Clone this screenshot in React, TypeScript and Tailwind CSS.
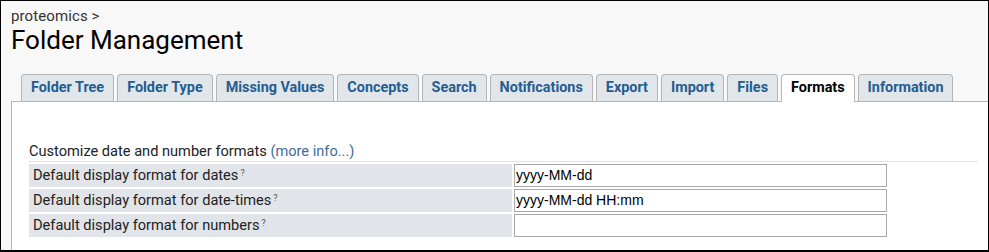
import React from "react";

const tabs = [
  "Folder Tree",
  "Folder Type",
  "Missing Values",
  "Concepts",
  "Search",
  "Notifications",
  "Export",
  "Import",
  "Files",
  "Formats",
  "Information",
];

const rows = [
  { label: "Default display format for dates", value: "yyyy-MM-dd" },
  { label: "Default display format for date-times", value: "yyyy-MM-dd HH:mm" },
  { label: "Default display format for numbers", value: "" },
];

export default function App() {
  return (
    <div className="w-[989px] h-[252px] overflow-hidden border-l border-t border-r border-b-2 border-black bg-[#f8f8f8] font-['Roboto',sans-serif] text-[#222]">
      <div className="pl-[10px] pt-[7px]">
        <div className="text-[15px] tracking-[0.1px] leading-[17px] text-[#333]">proteomics &gt;</div>
        <div className="text-[26px] leading-[30px] text-black">Folder Management</div>
      </div>
      <div className="mt-[19px] ml-[20px] flex gap-[3px] h-[27px] relative z-10">
        {tabs.map((t) => {
          const active = t === "Formats";
          return (
            <div
              key={t}
              className={
                active
                  ? "h-[28px] px-[9px] border-t border-l border-r border-[#b5b5b5] rounded-t-[4px] bg-white text-black font-bold text-[14.4px] leading-[26px]"
                  : "h-[27px] px-[9px] border-t border-l border-r border-[#b5b5b5] rounded-t-[4px] bg-[#e1e6ea] text-[#245d91] font-bold text-[14.4px] leading-[26px]"
              }
            >
              {t}
            </div>
          );
        })}
      </div>
      <div className="ml-[10px] border-l border-t border-[#b5b5b5] bg-white h-[200px] pl-[17px] pr-[10px] pt-[40px]">
        <div className="text-[14.6px] leading-[18px] text-[#222]">
          Customize date and number formats{" "}
          <span className="text-[#3f6c99]">(more info...)</span>
        </div>
        <div className="mt-[1px] h-[1px] bg-[#e3e3e3]" />
        <div className="mt-[2px] flex flex-col gap-[2px]">
          {rows.map((r) => (
            <div key={r.label} className="flex h-[23px]">
              <div className="w-[483px] bg-[#e1e5e9] pl-[4px] text-[14.6px] leading-[23px] text-[#222]">
                {r.label}
                <sup className="text-[9px] ml-[2px] text-[#555]">?</sup>
              </div>
              <div className="pl-[2px]">
                <div className="w-[373px] h-[23px] border border-[#a9a9a9] bg-white pl-[1px] font-['Liberation_Sans',sans-serif] text-[14px] leading-[21px] text-black">
                  {r.value}
                </div>
              </div>
            </div>
          ))}
        </div>
      </div>
    </div>
  );
}
